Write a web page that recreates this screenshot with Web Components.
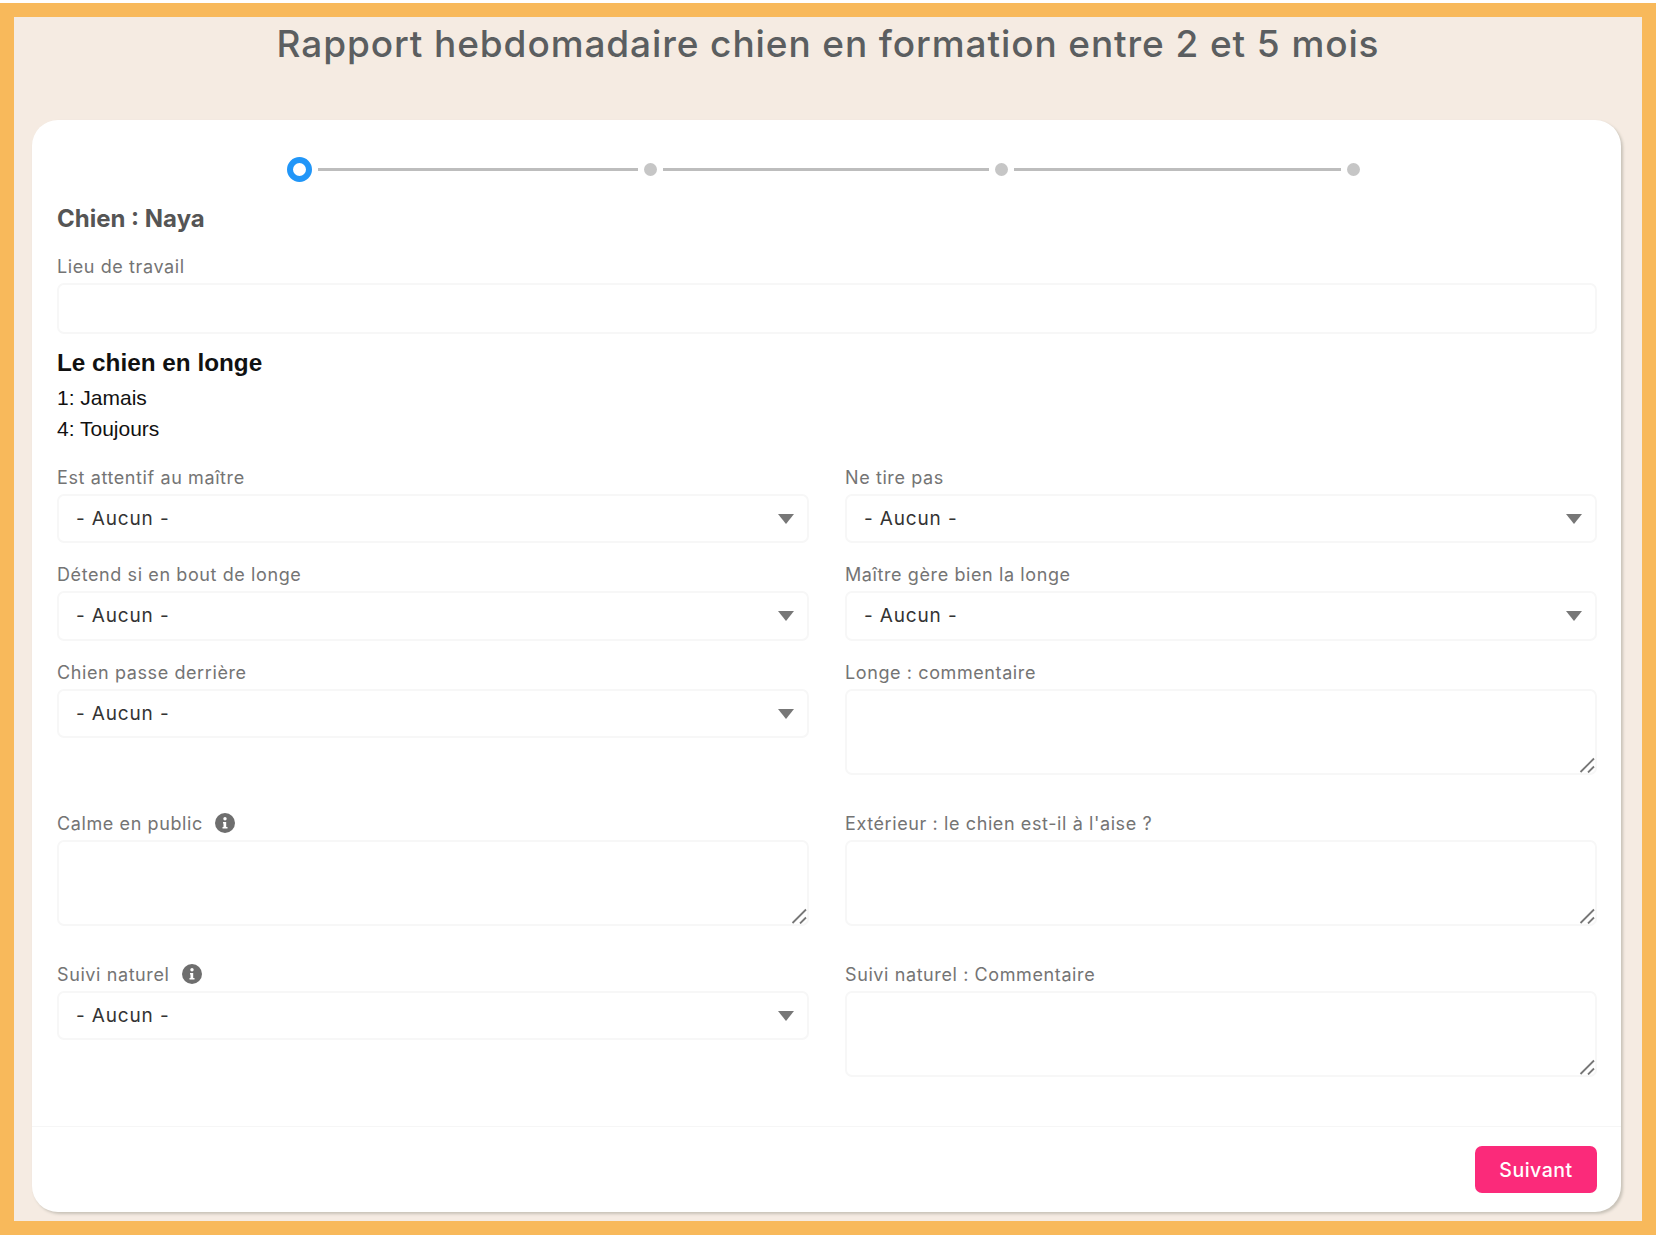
<!DOCTYPE html>
<html lang="fr">
<head>
<meta charset="utf-8">
<title>Rapport hebdomadaire</title>
<style>
html, body { height: 100%; margin: 0; background: #fff; }
</style>
</head>
<body>
<report-page>
    <span slot="title">Rapport hebdomadaire chien en formation entre 2 et 5 mois</span>

    <step-bar></step-bar>

    <section-title>Chien : Naya</section-title>
    <form-field kind="input">Lieu de travail</form-field>

    <legend-block>
        <span slot="heading">Le chien en longe</span>
        <span>1: Jamais</span>
        <span>4: Toujours</span>
    </legend-block>

    <field-grid>
        <form-field kind="select">Est attentif au maître</form-field>
        <form-field kind="select">Ne tire pas</form-field>
        <form-field kind="select">Détend si en bout de longe</form-field>
        <form-field kind="select">Maître gère bien la longe</form-field>
        <form-field kind="select">Chien passe derrière</form-field>
        <form-field kind="textarea">Longe : commentaire</form-field>
        <form-field kind="textarea" info>Calme en public</form-field>
        <form-field kind="textarea">Extérieur : le chien est-il à l'aise ?</form-field>
        <form-field kind="select" info>Suivi naturel</form-field>
        <form-field kind="textarea">Suivi naturel : Commentaire</form-field>
    </field-grid>

    <pink-button slot="footer">Suivant</pink-button>
</report-page>

<script>
const pageTemplate = document.createElement('template');
pageTemplate.innerHTML = `
    <style>
    :host {
        background: #f5ebe2;
        border: 14px solid #f8b95b;
        box-sizing: border-box;
        display: flex;
        flex-direction: column;
        font-family: Inter, "Liberation Sans", sans-serif;
        height: 1232px;
        margin: 3px 3px 0 0;
    }
    h1 {
        color: #5b5e60;
        font-size: 37px;
        font-weight: 500;
        height: 103px;
        letter-spacing: .9px;
        line-height: 54px;
        margin: 0;
        text-align: center;
    }
    .card {
        background: #fff;
        border-radius: 26px;
        box-shadow: 2px 2px 3px #c8c2b8;
        display: flex;
        flex: 1;
        flex-direction: column;
        margin: 0 21px 9px 18px;
    }
    .body {
        flex: 1;
        padding: 37px 24px 0 25px;
    }
    footer {
        border-top: 1px solid #f6f6f6;
        display: flex;
        justify-content: flex-end;
        padding: 19px 24px;
    }
    </style>
    <h1><slot name="title"></slot></h1>
    <div class="card">
        <div class="body"><slot></slot></div>
        <footer><slot name="footer"></slot></footer>
    </div>
`;

class ReportPage extends HTMLElement {
    constructor() {
        super();
        this.attachShadow({ mode: 'open' });
        this.shadowRoot.append(pageTemplate.content.cloneNode(true));
    }
}

const stepsTemplate = document.createElement('template');
stepsTemplate.innerHTML = `
    <style>
    :host {
        align-items: center;
        display: flex;
        gap: 6px;
        margin: 0 237px 0 230px;
    }
    .current {
        border: 6px solid #2196f8;
        border-radius: 50%;
        box-sizing: border-box;
        flex: none;
        height: 25px;
        width: 25px;
    }
    .dot {
        background: #c6c6c6;
        border-radius: 50%;
        flex: none;
        height: 13px;
        width: 13px;
    }
    .line {
        background: #bdbdbd;
        flex: 1 1 327px;
        height: 3px;
    }
    .line.first { flex-basis: 320px; }
    </style>
    <div class="current"></div>
    <div class="line first"></div>
    <div class="dot"></div>
    <div class="line"></div>
    <div class="dot"></div>
    <div class="line"></div>
    <div class="dot"></div>
`;

class StepBar extends HTMLElement {
    constructor() {
        super();
        this.attachShadow({ mode: 'open' });
        this.shadowRoot.append(stepsTemplate.content.cloneNode(true));
    }
}

const sectionTemplate = document.createElement('template');
sectionTemplate.innerHTML = `
    <style>
    :host {
        color: #555;
        display: block;
        font-size: 24px;
        font-weight: 700;
        line-height: 30px;
        margin: 22px 0 20.5px;
    }
    </style>
    <slot></slot>
`;

class SectionTitle extends HTMLElement {
    constructor() {
        super();
        this.attachShadow({ mode: 'open' });
        this.shadowRoot.append(sectionTemplate.content.cloneNode(true));
    }
}

const legendTemplate = document.createElement('template');
legendTemplate.innerHTML = `
    <style>
    :host {
        color: #111;
        display: flex;
        flex-direction: column;
        font-family: "Liberation Sans", Arial, sans-serif;
        font-size: 21px;
        line-height: 31px;
        margin: 14.5px 0 21.5px;
    }
    .heading {
        font-size: 24.3px;
        font-weight: 700;
        line-height: 30px;
        margin-bottom: 3.5px;
    }
    </style>
    <div class="heading"><slot name="heading"></slot></div>
    <slot></slot>
`;

class LegendBlock extends HTMLElement {
    constructor() {
        super();
        this.attachShadow({ mode: 'open' });
        this.shadowRoot.append(legendTemplate.content.cloneNode(true));
    }
}

const gridTemplate = document.createElement('template');
gridTemplate.innerHTML = `
    <style>
    :host {
        display: grid;
        gap: 19.5px 36px;
        grid-template-columns: 1fr 1fr;
    }
    </style>
    <slot></slot>
`;

class FieldGrid extends HTMLElement {
    constructor() {
        super();
        this.attachShadow({ mode: 'open' });
        this.shadowRoot.append(gridTemplate.content.cloneNode(true));
    }
}

const fieldTemplate = document.createElement('template');
fieldTemplate.innerHTML = `
    <style>
    :host {
        color: #747474;
        display: block;
        font-size: 18px;
        letter-spacing: .6px;
    }
    label {
        align-items: center;
        display: flex;
        gap: 12.5px;
        height: 24px;
        margin-bottom: 4.5px;
    }
    .info { display: none; flex: none; }
    :host([info]) .info { display: block; }
    .control { position: relative; }
    input, select, textarea {
        background: #fff;
        border: 2px solid #f7f7f7;
        border-radius: 7px;
        box-sizing: border-box;
        color: #333;
        display: block;
        font: inherit;
        font-size: 19px;
        letter-spacing: .85px;
        margin: 0;
        outline: none;
        padding: 0 17px;
        width: 100%;
    }
    input { height: 50.5px; }
    select {
        appearance: none;
        height: 49.5px;
    }
    textarea {
        height: 86px;
        margin-bottom: 17px;
        resize: none;
    }
    svg.arrow, svg.grip { pointer-events: none; position: absolute; }
    svg.arrow { right: 15px; top: 20px; }
    svg.grip { bottom: 2px; right: 2px; }
    </style>
    <label><span><slot></slot></span>
        <svg class="info" width="20" height="20" viewBox="0 0 20 20">
            <circle cx="10" cy="10" r="10" fill="#6e6e6e"/>
            <circle cx="10" cy="5.8" r="1.7" fill="#fff"/>
            <path d="M8 9h3.2v5H12.5v1.6h-5V14h1V10.5H8z" fill="#fff"/>
        </svg>
    </label>
    <div class="control"></div>
`;

const arrowIcon = `<svg class="arrow" width="16" height="10" viewBox="0 0 16 10"><path d="M0 0h16L8 10z" fill="#777"/></svg>`;
const gripIcon = `<svg class="grip" width="16" height="16" viewBox="0 0 16 16"><path d="M1.5 15 15 1.5M9 15.5l6-6" stroke="#777" stroke-width="1.8" fill="none"/></svg>`;

class FormField extends HTMLElement {
    constructor() {
        super();
        this.attachShadow({ mode: 'open' });
        this.shadowRoot.append(fieldTemplate.content.cloneNode(true));
    }

    connectedCallback() {
        const control = this.shadowRoot.querySelector('.control');
        switch(this.getAttribute('kind')) {
            case 'select':
                control.innerHTML = `<select><option>- Aucun -</option></select>${arrowIcon}`;
                break;
            case 'textarea':
                control.innerHTML = `<textarea></textarea>${gripIcon}`;
                break;
            default:
                control.innerHTML = `<input type="text">`;
        }
    }
}

const buttonTemplate = document.createElement('template');
buttonTemplate.innerHTML = `
    <style>
    :host { display: block; }
    button {
        background: #fb2a7a;
        border: 0;
        border-radius: 7px;
        color: #fff;
        display: block;
        font: inherit;
        font-size: 19.5px;
        font-weight: 500;
        height: 47px;
        letter-spacing: .5px;
        padding: 0;
        width: 122px;
    }
    </style>
    <button type="button"><slot></slot></button>
`;

class PinkButton extends HTMLElement {
    constructor() {
        super();
        this.attachShadow({ mode: 'open' });
        this.shadowRoot.append(buttonTemplate.content.cloneNode(true));
    }
}

window.customElements.define('report-page', ReportPage);
window.customElements.define('step-bar', StepBar);
window.customElements.define('section-title', SectionTitle);
window.customElements.define('legend-block', LegendBlock);
window.customElements.define('field-grid', FieldGrid);
window.customElements.define('form-field', FormField);
window.customElements.define('pink-button', PinkButton);
</script>
</body>
</html>
